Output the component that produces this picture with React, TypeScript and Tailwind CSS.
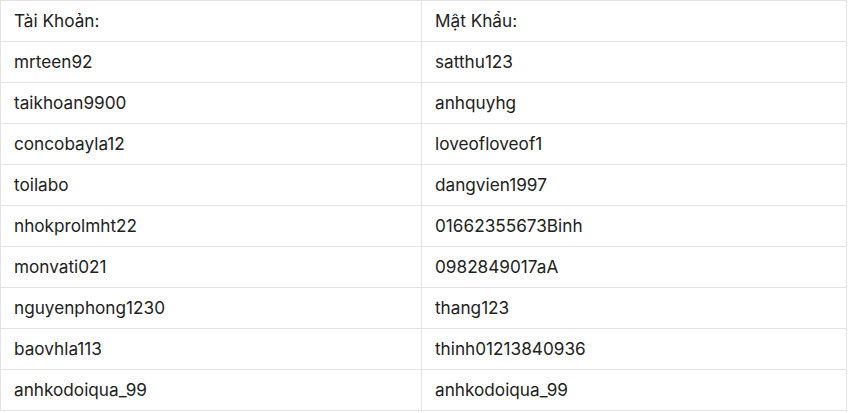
import React from "react";

const rows: [string, string][] = [
  ["Tài Khoản:", "Mật Khẩu:"],
  ["mrteen92", "satthu123"],
  ["taikhoan9900", "anhquyhg"],
  ["concobayla12", "loveofloveof1"],
  ["toilabo", "dangvien1997"],
  ["nhokprolmht22", "01662355673Binh"],
  ["monvati021", "0982849017aA"],
  ["nguyenphong1230", "thang123"],
  ["baovhla113", "thinh01213840936"],
  ["anhkodoiqua_99", "anhkodoiqua_99"],
];

export default function App() {
  return (
    <div className="bg-white w-[848px] h-[413px]" style={{ fontFamily: 'Inter, sans-serif' }}>
      <table className="border-collapse w-[847px] table-fixed text-[17.2px] text-[#222]">
        <tbody>
          {rows.map(([a, b], i) => (
            <tr key={i} className="h-[41px]">
              <td className="w-[421px] border border-[#e3e3e3] pl-[13px] py-0 align-middle">{a}</td>
              <td className="border border-[#e3e3e3] pl-[13px] py-0 align-middle">{b}</td>
            </tr>
          ))}
        </tbody>
      </table>
    </div>
  );
}
